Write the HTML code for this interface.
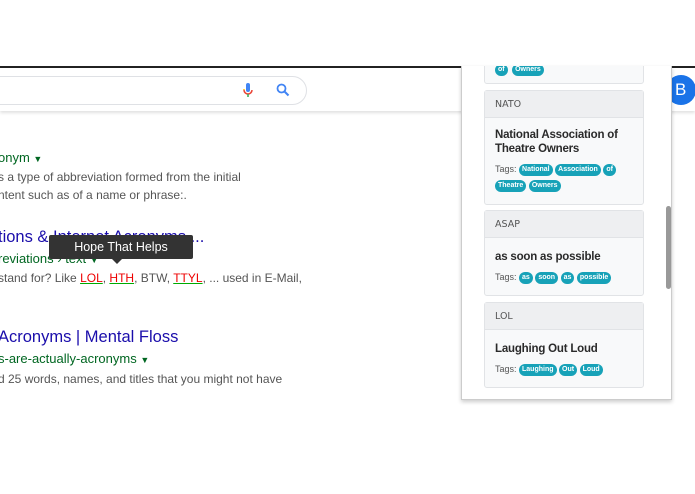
<!DOCTYPE html>
<html><head><meta charset="utf-8"><style>
*{margin:0;padding:0;box-sizing:border-box}
body{width:695px;height:494px;overflow:hidden;background:#fff;font-family:"Liberation Sans",Arial,sans-serif;position:relative}
.abs{position:absolute}
.topline{left:0;top:66px;width:695px;height:2px;background:#222}
.hdr{left:0;top:68px;width:695px;height:43px;background:#fff;box-shadow:0 2px 3px rgba(0,0,0,.12)}
.search{left:-30px;top:76px;width:337px;height:29px;border:1px solid #dfe1e5;border-radius:15px;background:#fff}
.avatar{left:666px;top:75px;width:30px;height:30px;border-radius:50%;background:#1a73e8;color:#fff;font-size:17px;line-height:30px;text-indent:9px}
.t{white-space:nowrap}
.link{color:#1a0dab;font-size:16.5px}
.url{color:#006621;font-size:13px}
.sn{color:#555;font-size:12px}
.red{color:#e00;text-decoration:underline;text-decoration-color:#0a0}
.tip{left:49px;top:235px;width:144px;height:24px;background:#333;border-radius:2px;color:#fff;font-size:12.5px;text-align:center;line-height:24px}
.tip:after{content:"";position:absolute;left:63px;bottom:-5px;border:5px solid transparent;border-bottom:0;border-top-color:#333}
.panel{left:461px;top:66px;width:211px;height:334px;background:#fff;border:1px solid #ccc;border-top:none;box-shadow:0 2px 4px rgba(0,0,0,.2);overflow:hidden}
.card{position:absolute;left:22px;width:160px;border:1px solid #e1e3e6;border-radius:3px;background:#f8f9fa}
.ch{height:27px;background:#eeeff1;border-bottom:1px solid #e1e3e6;font-size:9.5px;color:#555;padding:8px 0 0 10px;font-family:"DejaVu Sans",sans-serif}
.cb{padding:10px 8px 0 10px}
.title{font-family:"Liberation Sans",sans-serif;font-size:11.5px;color:#2a2a2a;line-height:14px;font-weight:bold;letter-spacing:-0.2px}
.tags{font-family:"Liberation Sans",sans-serif;font-size:9px;color:#555;margin-top:5px;line-height:16px;white-space:nowrap}
.tag{display:inline-block;background:#17a2b8;color:#fff;font-size:7px;font-weight:bold;border-radius:7px;padding:0 3px;line-height:12px;vertical-align:1px}
.sb{left:204px;top:140px;width:5px;height:83px;background:#999;border-radius:3px}
</style></head><body>
<div class="abs topline"></div>
<div class="abs hdr"></div>
<div class="abs search"></div>
<svg class="abs" style="left:242px;top:82px" width="12" height="17" viewBox="0 0 12 17"><rect x="4" y="1" width="4" height="9" rx="2" fill="#4285f4"/><path d="M2 8a4 4 0 0 0 8 0" stroke="#ea4335" stroke-width="1.5" fill="none"/><path d="M6 12v3" stroke="#34a853" stroke-width="1.5"/><path d="M2 8v-1" stroke="#fbbc05" stroke-width="1.5"/></svg>
<svg class="abs" style="left:276px;top:83px" width="14" height="14" viewBox="0 0 14 14"><circle cx="5.5" cy="5.5" r="4" stroke="#4285f4" stroke-width="1.8" fill="none"/><path d="M8.5 8.5l4 4" stroke="#4285f4" stroke-width="2"/></svg>
<div class="abs avatar">B</div>

<div class="abs t url" style="left:-2px;top:150px">onym <span style="font-size:9px">▼</span></div>
<div class="abs t sn" style="left:-2px;top:170px">s a type of abbreviation formed from the initial</div>
<div class="abs t sn" style="left:-2px;top:188px">ntent such as of a name or phrase:.</div>

<div class="abs t link" style="left:-2px;top:228px">tions &amp; Internet Acronyms ...</div>
<div class="abs t url" style="left:-2px;top:251px">reviations › text <span style="font-size:9px">▼</span></div>
<div class="abs t sn" style="left:-2px;top:271px">stand for? Like <span class="red">LOL</span>, <span class="red">HTH</span>, BTW, <span class="red">TTYL</span>, ... used in E-Mail,</div>
<div class="abs tip">Hope That Helps</div>

<div class="abs t link" style="left:-2px;top:328px">Acronyms | Mental Floss</div>
<div class="abs t url" style="left:-2px;top:351px">s-are-actually-acronyms <span style="font-size:9px">▼</span></div>
<div class="abs t sn" style="left:-2px;top:372px">d 25 words, names, and titles that you might not have</div>

<div class="abs panel">
 <div class="card" style="top:-20px;height:38px"><div style="position:absolute;left:10px;top:12px"><span class="tag">of</span> <span class="tag">Owners</span></div></div>
 <div class="card" style="top:24px;height:115px"><div class="ch">NATO</div><div class="cb"><div class="title">National Association of<br>Theatre Owners</div><div class="tags">Tags: <span class="tag">National</span> <span class="tag">Association</span> <span class="tag">of</span><br><span class="tag">Theatre</span> <span class="tag">Owners</span></div></div></div>
 <div class="card" style="top:144px;height:86px"><div class="ch">ASAP</div><div class="cb"><div class="title" style="margin-top:2px">as soon as possible</div><div class="tags">Tags: <span class="tag">as</span> <span class="tag">soon</span> <span class="tag">as</span> <span class="tag">possible</span></div></div></div>
 <div class="card" style="top:236px;height:86px"><div class="ch">LOL</div><div class="cb"><div class="title" style="margin-top:2px">Laughing Out Loud</div><div class="tags">Tags: <span class="tag">Laughing</span> <span class="tag">Out</span> <span class="tag">Loud</span></div></div></div>
 <div class="abs sb"></div>
</div>
</body></html>
